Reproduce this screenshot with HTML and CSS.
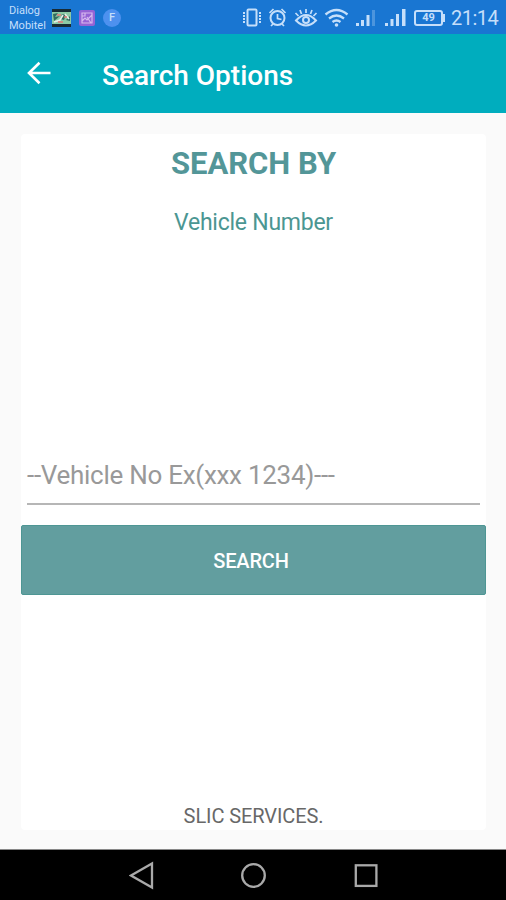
FILE: index.html
```html
<!DOCTYPE html>
<html lang="en">
<head>
<meta charset="utf-8">
<title>Search Options</title>
<link rel="stylesheet" href="styles.css">
</head>
<body>
<div class="status">
  <div class="carriers"><span>Dialog</span><span>Mobitel</span></div>
  <svg class="thumb" width="19" height="18" viewBox="0 0 19 18">
    <rect width="19" height="18" fill="#182b35"/>
    <path d="M0 3h19v12H0z" fill="#8ccaa5"/>
    <path d="M1 5l5-1-3 4 5-1-6 5zM10 5l4 1-2 5-4-1zM14 11l4-4v5z" fill="#326b60"/>
    <path d="M2 13l6-2 3-5M13 5l4 5" stroke="#e8eee9" stroke-width="1.6" fill="none"/>
    <path d="M5 6h4M12 8h3M6 13h5" stroke="#e17977" stroke-width="1.3"/>
  </svg>
  <svg class="gallery" width="16" height="16" viewBox="0 0 16 16">
    <rect width="16" height="16" rx="2" fill="#9563d5"/>
    <path d="M3 3h10v10H3zM3 11l3-3 2 2 5-5M6 3v3H3M8 7l4 6" fill="none" stroke="#d7b9ef" stroke-width="1.2"/>
  </svg>
  <span class="badge">F</span>
  <svg class="indicators" width="164" height="24" viewBox="243 5 164 24" fill="none" stroke="#c5dffa" stroke-width="2">
    <rect x="247.500" y="9.500" width="9" height="16" rx="1"/>
    <path d="M244 12v11M260 12v11" stroke-dasharray="2 1"/>
    <circle cx="277.500" cy="18" r="7"/>
    <path d="M277.500 14v4.500l4 1M269.500 13l4-4M285.500 13l-4-4M273 24l-2 2M282 24l2 2" stroke-width="1.700"/>
    <path d="M296 20.500q10-11 20 0q-10 10-20 0z"/>
    <circle cx="306" cy="20" r="3"/>
    <path d="M306 9v4M300 10l1.500 4M312 10l-1.500 4M295.500 13l3 3M316.500 13l-3 3" stroke-width="1.700"/>
    <path d="M325.500 14.500q11-9 22 0M329 18.500q7.500-6 15 0M332.500 22q4-3 8 0" stroke-width="2.300"/>
    <circle cx="336.500" cy="25" r="1.800" fill="#c5dffa" stroke="none"/>
    <g stroke="none" fill="#c5dffa">
      <path d="M356 23h3v3h-3zM361 20h3v6h-3zM366.500 15h3v11h-3z"/>
      <path d="M372 10h3v16h-3z" opacity=".3"/>
      <path d="M385 23h3v3h-3zM390.500 19h3v7h-3zM396 14h3v12h-3zM402 9h3.500v17H402z"/>
    </g>
  </svg>
  <div class="battery">49</div>
  <span class="time">21:14</span>
</div>
<header>
  <svg width="24" height="24" viewBox="0 0 24 24" fill="none" stroke="#fff" stroke-width="2.600"><path d="M23.500 12H2M12.500 1.700L2 12l10.500 10.300"/></svg>
  <h1>Search Options</h1>
</header>
<main>
  <section class="card">
    <h2>SEARCH BY</h2>
    <p class="mode">Vehicle Number</p>
    <div class="field">--Vehicle No Ex(xxx 1234)---</div>
    <button>SEARCH</button>
    <p class="footer">SLIC SERVICES.</p>
  </section>
</main>
<nav>
  <svg width="250" height="30" viewBox="129 860 250 30" fill="none" stroke="#a9a9a9" stroke-width="2.300">
    <path d="M131 875.500l21-12v24z"/>
    <circle cx="253.500" cy="875.500" r="11.300"/>
    <rect x="355.800" y="865.300" width="20.600" height="20.600"/>
  </svg>
</nav>
</body>
</html>
```
FILE: styles.css
```css
* { box-sizing: border-box; }
body { margin: 0; width: 506px; height: 900px; display: flex; flex-direction: column; overflow: hidden; background: #fafafa; font-family: Roboto, "Liberation Sans", sans-serif; }
svg { display: block; flex: none; }
h1, h2, p { margin: 0; white-space: nowrap; }

.status { height: 34px; flex: none; display: flex; align-items: center; padding-left: 9px; background: #1976d2; color: #c5dffa; }
.carriers { width: 43px; display: flex; flex-direction: column; font-size: 11px; line-height: 15px; margin-top: 2px; }
.thumb { margin-top: 1px; }
.gallery { margin: 1px 0 0 8px; }
.badge { width: 18px; height: 18px; margin: 1px 0 0 8px; border-radius: 50%; background: #4d91ef; font-size: 11px; font-weight: 500; line-height: 18px; text-align: center; }
.indicators { margin-left: 122px; }
.battery { position: relative; width: 29px; height: 16px; margin: 1px 0 0 7px; border: 2px solid #c5dffa; border-radius: 3px; font-size: 11px; font-weight: 700; line-height: 12px; text-align: center; }
.battery::after { content: ""; position: absolute; left: 27px; top: 2px; width: 2px; height: 8px; background: #c5dffa; }
.time { margin: 2px 0 0 8px; font-size: 20px; line-height: 24px; letter-spacing: -0.5px; }

header { height: 79px; flex: none; display: flex; align-items: center; padding-left: 27px; background: #00adbe; color: #fff; }
header svg { margin-top: -1px; }
h1 { margin: 4px 0 0 51px; font-size: 28px; font-weight: 500; line-height: 36px; }

main { height: 737px; flex: none; padding: 21px 20px 20px 21px; border-bottom: 1px solid #888; }
.card { height: 696px; display: flex; flex-direction: column; background: #fff; border-radius: 4px; text-align: center; }
h2 { margin-top: 10px; height: 40px; color: #539698; font-size: 31px; font-weight: 700; line-height: 40px; }
.mode { margin-top: 24px; color: #4b9692; font-size: 23px; line-height: 30px; letter-spacing: -0.25px; }
.field { height: 55px; margin: 212px 6px 0; border-bottom: 2px solid #b6b6b6; color: #999; font-size: 26px; line-height: 50px; letter-spacing: -0.28px; text-align: left; white-space: nowrap; }
button { height: 70px; flex: none; margin-top: 20px; padding: 2px 5px 0 0; border: 1px solid #4e9694; border-radius: 2px; background: #629e9f; color: #fff; font: 500 20px/28px Roboto, sans-serif; letter-spacing: -0.2px; }
.footer { margin-top: auto; padding-bottom: 1px; color: #686868; font-size: 20px; line-height: 26px; letter-spacing: -0.1px; }

nav { height: 50px; flex: none; display: flex; align-items: center; padding-left: 129px; background: #000; }
```
